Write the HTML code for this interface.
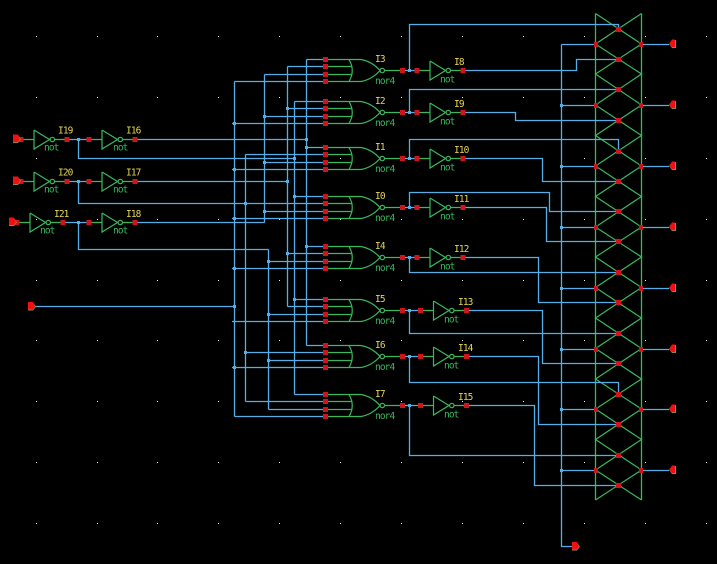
<!DOCTYPE html>
<html>
<head>
<meta charset="utf-8">
<style>
html,body{margin:0;padding:0;background:#000;width:717px;height:564px;overflow:hidden}
svg{display:block}
.w{fill:none;stroke:#55aee8;stroke-width:1.3}
.g{fill:none;stroke:#3ab85e;stroke-width:1.2}
.gc{fill:none;stroke:#3ab85e;stroke-width:1.3}
.r{fill:#d0141c;shape-rendering:crispEdges}
.d{fill:#55aee8;shape-rendering:crispEdges}
text{font-family:"DejaVu Sans Mono","Liberation Mono",monospace;font-size:9.5px;letter-spacing:-.9px}
.y{fill:#e6d650}
.n{fill:#3ab85e}
</style>
</head>
<body>
<svg width="717" height="564" viewBox="0 0 717 564" xmlns="http://www.w3.org/2000/svg">
<defs>
<g id="nor">
<path class="g" d="M327 -11H361Q372 -9 380 0Q372 9 361 11H327M327 -4H352.500M327 4H352.500M349 -11Q355.500 0 349 11M384.500 0H400"/>
<circle class="g" cx="382.300" cy="0" r="2.200"/>
<rect class="r" x="323" y="-13.500" width="5" height="5"/>
<rect class="r" x="323" y="-6.500" width="5" height="5"/>
<rect class="r" x="323" y="1.500" width="5" height="5"/>
<rect class="r" x="323" y="8.500" width="5" height="5"/>
<rect class="r" x="400" y="-2.500" width="5" height="5"/>
</g>
<g id="not">
<path class="g" d="M-11 0H0M0 -9.500V9.500L15.500 0L0 -9.500M20.500 0H31"/>
<circle class="g" cx="18.300" cy="0" r="2.200"/>
<rect class="r" x="-15.500" y="-2.500" width="5" height="5"/>
<rect class="r" x="30.500" y="-2.500" width="5" height="5"/>
</g>
<g id="pr">
<path fill="#a08038" d="M0 -4H5L8 0L5 4H0Z"/>
<path fill="#f01010" d="M0 -4.500H5L7 0L5 3H0Z"/>
</g>
<g id="pl">
<path fill="#a08038" d="M7 -4H3L0 0L3 4H7Z"/>
<path fill="#f01010" d="M6 -4.500H3L0 0L3 3H6Z"/>
</g>
</defs>
<rect width="717" height="564" fill="#000"/>
<path fill="#fff" shape-rendering="crispEdges" d="M36 36h1v1h-1zM97 36h1v1h-1zM157 36h1v1h-1zM218 36h1v1h-1zM279 36h1v1h-1zM340 36h1v1h-1zM401 36h1v1h-1zM462 36h1v1h-1zM523 36h1v1h-1zM584 36h1v1h-1zM645 36h1v1h-1zM706 36h1v1h-1zM36 97h1v1h-1zM97 97h1v1h-1zM157 97h1v1h-1zM218 97h1v1h-1zM279 97h1v1h-1zM340 97h1v1h-1zM401 97h1v1h-1zM462 97h1v1h-1zM523 97h1v1h-1zM584 97h1v1h-1zM645 97h1v1h-1zM706 97h1v1h-1zM36 158h1v1h-1zM97 158h1v1h-1zM157 158h1v1h-1zM218 158h1v1h-1zM279 158h1v1h-1zM340 158h1v1h-1zM401 158h1v1h-1zM462 158h1v1h-1zM523 158h1v1h-1zM584 158h1v1h-1zM645 158h1v1h-1zM706 158h1v1h-1zM36 219h1v1h-1zM97 219h1v1h-1zM157 219h1v1h-1zM218 219h1v1h-1zM279 219h1v1h-1zM340 219h1v1h-1zM401 219h1v1h-1zM462 219h1v1h-1zM523 219h1v1h-1zM584 219h1v1h-1zM645 219h1v1h-1zM706 219h1v1h-1zM36 280h1v1h-1zM97 280h1v1h-1zM157 280h1v1h-1zM218 280h1v1h-1zM279 280h1v1h-1zM340 280h1v1h-1zM401 280h1v1h-1zM462 280h1v1h-1zM523 280h1v1h-1zM584 280h1v1h-1zM645 280h1v1h-1zM706 280h1v1h-1zM36 340h1v1h-1zM97 340h1v1h-1zM157 340h1v1h-1zM218 340h1v1h-1zM279 340h1v1h-1zM340 340h1v1h-1zM401 340h1v1h-1zM462 340h1v1h-1zM523 340h1v1h-1zM584 340h1v1h-1zM645 340h1v1h-1zM706 340h1v1h-1zM36 401h1v1h-1zM97 401h1v1h-1zM157 401h1v1h-1zM218 401h1v1h-1zM279 401h1v1h-1zM340 401h1v1h-1zM401 401h1v1h-1zM462 401h1v1h-1zM523 401h1v1h-1zM584 401h1v1h-1zM645 401h1v1h-1zM706 401h1v1h-1zM36 462h1v1h-1zM97 462h1v1h-1zM157 462h1v1h-1zM218 462h1v1h-1zM279 462h1v1h-1zM340 462h1v1h-1zM401 462h1v1h-1zM462 462h1v1h-1zM523 462h1v1h-1zM584 462h1v1h-1zM645 462h1v1h-1zM706 462h1v1h-1zM36 523h1v1h-1zM97 523h1v1h-1zM157 523h1v1h-1zM218 523h1v1h-1zM279 523h1v1h-1zM340 523h1v1h-1zM401 523h1v1h-1zM462 523h1v1h-1zM523 523h1v1h-1zM584 523h1v1h-1zM645 523h1v1h-1zM706 523h1v1h-1z"/>

<!-- passgate array -->
<path class="gc" d="M595.500 13.500V500M641.500 13.500V500"/>
<path class="g" d="M595.500 13.500L641.500 44L595.500 74L641.500 105L595.500 135.500L641.500 166L595.500 196.500L641.500 227L595.500 257L641.500 287.500L595.500 318L641.500 348.500L595.500 379L641.500 409L595.500 439.500L641.500 470L595.500 500"/>
<path class="g" d="M641.500 13.500L595.500 44L641.500 74L595.500 105L641.500 135.500L595.500 166L641.500 196.500L595.500 227L641.500 257L595.500 287.500L641.500 318L595.500 348.500L641.500 379L595.500 409L641.500 439.500L595.500 470L641.500 500"/>

<!-- wires -->
<path class="w" d="M69 139.500H87M69 181.500H87M65 222.500H87
M78.500 139.500V158.500H294.500M78.500 181.500V203.500H325M78.500 222.500V249.500H268.500
M137 139.500H306.500M137 181.500H287.500M137 222.500H264.500M35 306.500H234.500
M234.500 81.500V416.500M245.500 154.500V401.500M264.500 74.500V222.500M268.500 249.500V409.500M287.500 66.500V306.500M294.500 101.500V394.500M306.500 59.500V345.500
M306.500 59.500H325M287.500 66.500H325M264.500 74.500H325M234.500 81.500H325
M294.500 101.500H325M287.500 108.500H325M264.500 116.500H325M232 123.500H325
M306.500 147.500H325M245.500 154.500H325M264.500 162.500H325M232 169.500H325
M294.500 196.500H325M264.500 211.500H325M232 218.500H325
M306.500 246.500H325M287.500 253.500H325M268.500 261.500H325M232 268.500H325
M294.500 299.500H325M287.500 306.500H325M268.500 314.500H325M232 321.500H325
M306.500 345.500H325M245.500 352.500H325M268.500 360.500H325M232 367.500H325
M294.500 394.500H325M245.500 401.500H325M268.500 409.500H325M234.500 416.500H325
M404 70.500H416M404 112.500H416M404 158.500H416M404 207.500H416M404 257.500H416M404 310.500H419M404 356.500H419M404 405.500H419
M409.500 70.500V24.500H618.500V29M409.500 112.500V89.500H618.500M409.500 158.500V139.500H618.500V151M409.500 207.500V192.500H549.500V211.500H618.500
M409.500 257.500V272.500H618.500M409.500 310.500V333.500H618.500M409.500 356.500V382.500H618.500V394M409.500 405.500V455.500H618.500
M464 70.500H576.500V59.500H618.500M464 112.500H515.500V120.500H618.500M464 158.500H542.500V181.500H618.500M464 207.500H546.500V241.500H618.500
M464 257.500H538.500V302.500H618.500M468 310.500H542.500V363.500H618.500M468 356.500H538.500V424.500H618.500M468 405.500H534.500V485.500H618.500
M561.500 44.500V546.500H572M561.500 44.500H596M561.500 105.500H596M561.500 166.500H596M561.500 227.500H596M561.500 288.500H596M561.500 349.500H596M561.500 409.500H596M561.500 470.500H596
M641 44.500H669M641 105.500H669M641 166.500H669M641 227.500H669M641 288.500H669M641 349.500H669M641 409.500H669M641 470.500H669"/>

<!-- junction dots -->
<path class="d" d="M77 138h3v3h-3zM77 180h3v3h-3zM77 221h3v3h-3z
M305 138h3v3h-3zM305 146h3v3h-3zM293 157h3v3h-3zM286 107h3v3h-3zM263 115h3v3h-3zM263 161h3v3h-3zM286 180h3v3h-3zM244 202h3v3h-3zM263 210h3v3h-3zM293 195h3v3h-3z
M305 245h3v3h-3zM286 252h3v3h-3zM267 260h3v3h-3zM233 267h3v3h-3zM293 298h3v3h-3zM267 313h3v3h-3zM233 305h3v3h-3zM244 351h3v3h-3zM267 359h3v3h-3zM233 366h3v3h-3zM233 217h3v3h-3zM233 168h3v3h-3zM233 122h3v3h-3z
M408 69h3v3h-3zM408 111h3v3h-3zM408 157h3v3h-3zM408 206h3v3h-3zM408 256h3v3h-3zM408 309h3v3h-3zM408 355h3v3h-3zM408 404h3v3h-3z
M560 104h3v3h-3zM560 165h3v3h-3zM560 226h3v3h-3zM560 287h3v3h-3zM560 348h3v3h-3zM560 408h3v3h-3zM560 469h3v3h-3z"/>

<!-- nor gates -->
<use href="#nor" y="70.500"/>
<use href="#nor" y="112.500"/>
<use href="#nor" y="158.500"/>
<use href="#nor" y="207.500"/>
<use href="#nor" y="257.500"/>
<use href="#nor" y="310.500"/>
<use href="#nor" y="356.500"/>
<use href="#nor" y="405.500"/>

<!-- inverters -->
<use href="#not" x="34" y="139.500"/>
<use href="#not" x="102" y="139.500"/>
<use href="#not" x="34" y="181.500"/>
<use href="#not" x="102" y="181.500"/>
<use href="#not" x="30" y="222.500"/>
<use href="#not" x="102" y="222.500"/>
<use href="#not" x="430" y="70.500"/>
<use href="#not" x="430" y="112.500"/>
<use href="#not" x="430" y="158.500"/>
<use href="#not" x="430" y="207.500"/>
<use href="#not" x="430" y="257.500"/>
<use href="#not" x="433.500" y="310.500"/>
<use href="#not" x="433.500" y="356.500"/>
<use href="#not" x="433.500" y="405.500"/>

<!-- centre nodes -->
<path class="r" d="M616 27h5v5h-5zM616 57h5v5h-5zM616 87h5v5h-5zM616 118h5v5h-5zM616 149h5v5h-5zM616 179h5v5h-5zM616 209h5v5h-5zM616 239h5v5h-5zM616 270h5v5h-5zM616 300h5v5h-5zM616 331h5v5h-5zM616 361h5v5h-5zM616 392h5v5h-5zM616 422h5v5h-5zM616 453h5v5h-5zM616 483h5v5h-5z
M594 42h4v5h-4zM594 103h4v5h-4zM594 164h4v5h-4zM594 225h4v5h-4zM594 286h4v5h-4zM594 347h4v5h-4zM594 407h4v5h-4zM594 468h4v5h-4z
M639 42h4v5h-4zM639 103h4v5h-4zM639 164h4v5h-4zM639 225h4v5h-4zM639 286h4v5h-4zM639 347h4v5h-4zM639 407h4v5h-4zM639 468h4v5h-4z"/>

<!-- pins -->
<use href="#pr" x="13" y="139"/>
<use href="#pr" x="13" y="181"/>
<use href="#pr" x="9" y="222"/>
<use href="#pr" x="28" y="306.500"/>
<use href="#pr" x="572" y="546.500"/>
<use href="#pl" x="669" y="44"/>
<use href="#pl" x="669" y="105"/>
<use href="#pl" x="669" y="166"/>
<use href="#pl" x="669" y="227"/>
<use href="#pl" x="669" y="288"/>
<use href="#pl" x="669" y="349"/>
<use href="#pl" x="669" y="409"/>
<use href="#pl" x="669" y="470"/>

<!-- labels -->
<g class="y">
<text x="58" y="133.500">I19</text><text x="126" y="133.500">I16</text>
<text x="58" y="175.500">I20</text><text x="126" y="175.500">I17</text>
<text x="54" y="217">I21</text><text x="126" y="217">I18</text>
<text x="375" y="62">I3</text><text x="375" y="104">I2</text><text x="375" y="150">I1</text><text x="375" y="199">I0</text>
<text x="375" y="249">I4</text><text x="375" y="302">I5</text><text x="375" y="348">I6</text><text x="375" y="397">I7</text>
<text x="454" y="65">I8</text><text x="454" y="107">I9</text><text x="454" y="153">I10</text><text x="454" y="202">I11</text><text x="454" y="252">I12</text>
<text x="458" y="305">I13</text><text x="458" y="351">I14</text><text x="458" y="400">I15</text>
</g>
<g class="n">
<text x="44" y="150.500">not</text><text x="113" y="150.500">not</text>
<text x="44" y="192.500">not</text><text x="113" y="192.500">not</text>
<text x="40" y="233.500">not</text><text x="113" y="233.500">not</text>
<text x="375" y="84">nor4</text><text x="375" y="126">nor4</text><text x="375" y="172">nor4</text><text x="375" y="221">nor4</text>
<text x="375" y="271">nor4</text><text x="375" y="324">nor4</text><text x="375" y="370">nor4</text><text x="375" y="419">nor4</text>
<text x="440" y="82.500">not</text><text x="440" y="124.500">not</text><text x="440" y="170.500">not</text><text x="440" y="219.500">not</text><text x="440" y="269.500">not</text>
<text x="444" y="322.500">not</text><text x="444" y="368.500">not</text><text x="444" y="417.500">not</text>
</g>
</svg>
</body>
</html>
